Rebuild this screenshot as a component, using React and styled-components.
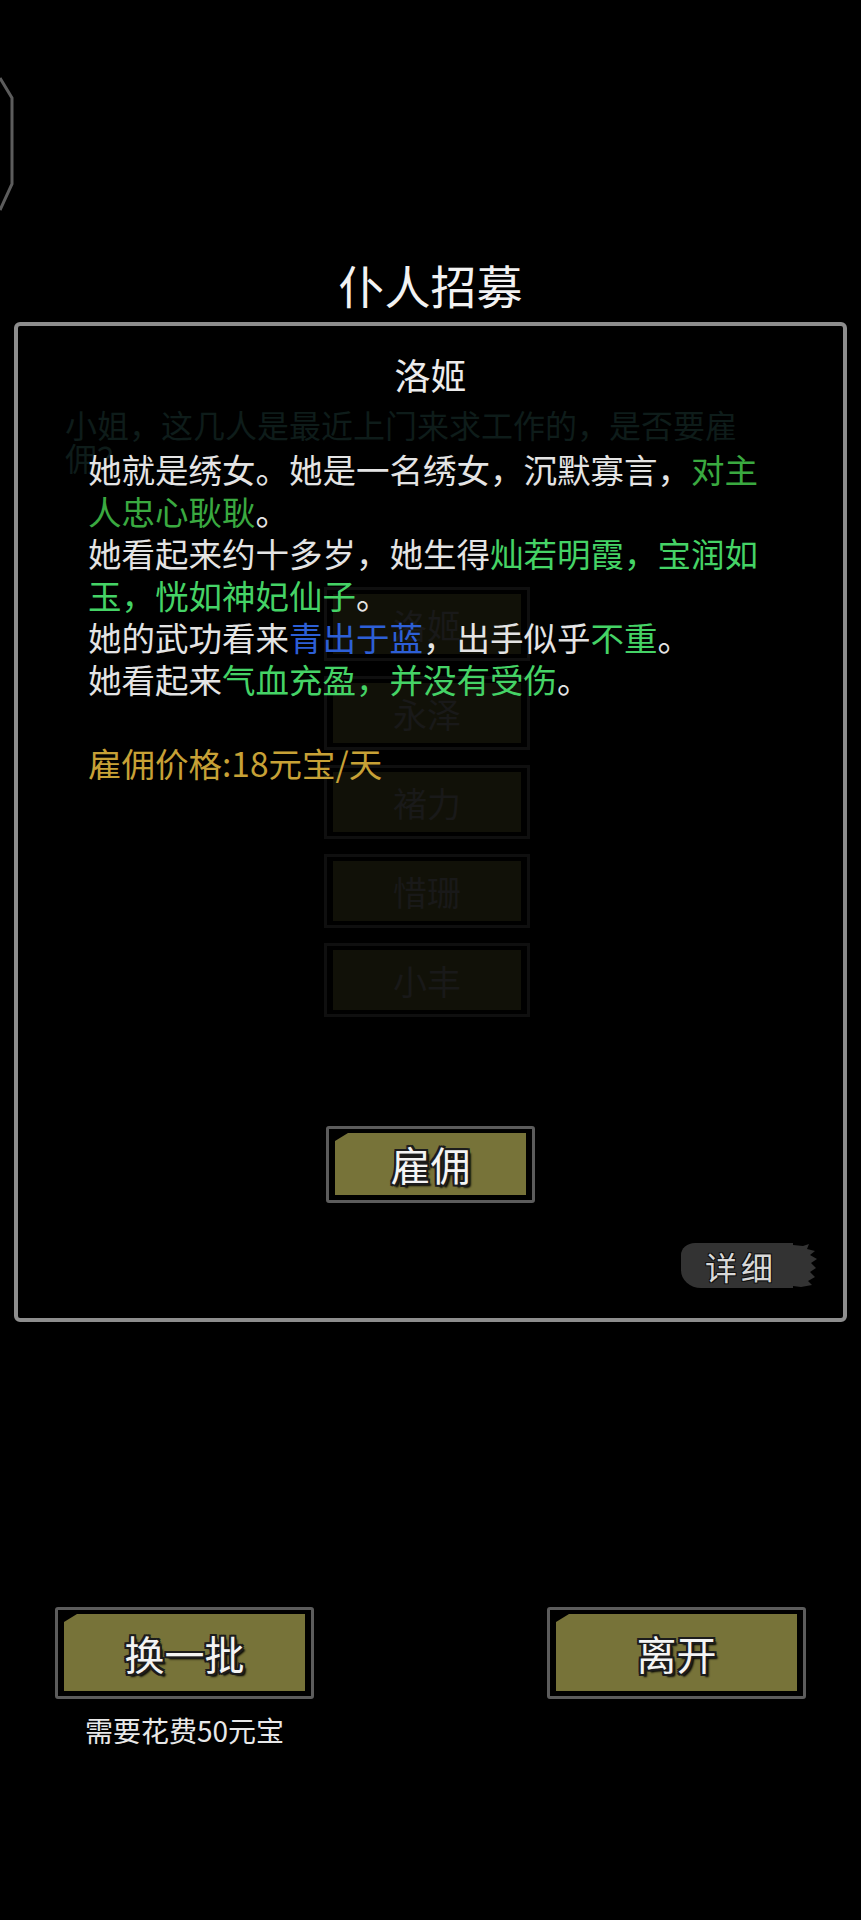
import React from 'react'
import styled, { createGlobalStyle } from 'styled-components'

const GlobalStyle = createGlobalStyle`
  html, body {
    margin: 0;
    padding: 0;
    background: #000;
  }
  body {
    font-family: 'Noto Sans CJK SC', 'Noto Sans', sans-serif;
    color: #e6e6e6;
  }
`

const candidates = ['洛姬', '永泽', '褚力', '惜珊', '小丰']

export default () => (
  <Root>
    <GlobalStyle />
    <EdgeTab viewBox="0 0 14 136" width="14" height="136">
      <path d="M0 2 L12 22 L12 108 L0 134" fill="none" stroke="#5c5c5c" strokeWidth="3" />
    </EdgeTab>

    {/* the hiring screen below the popup, dimmed */}
    <Underlay>
      <DimText>小姐，这几人是最近上门来求工作的，是否要雇佣？</DimText>
      <DimList>
        {candidates.map(name => (
          <DimButton key={name}>{name}</DimButton>
        ))}
      </DimList>
    </Underlay>

    <Overlay>
      <Title>仆人招募</Title>
      <Panel>
        <Name>洛姬</Name>
        <Desc>
          她就是绣女。她是一名绣女，沉默寡言，<Tint $c="#3aa940">对主人忠心耿耿</Tint>。<br />
          她看起来约十多岁，她生得<Tint $c="#45d366">灿若明霞，宝润如玉，恍如神妃仙子</Tint>。<br />
          她的武功看来<Tint $c="#2d5fd6">青出于蓝</Tint>，出手似乎<Tint $c="#45d366">不重</Tint>。<br />
          她看起来<Tint $c="#45d366">气血充盈，并没有受伤</Tint>。<br />
          <br />
          <Tint $c="#c7a136">雇佣价格:18元宝/天</Tint>
        </Desc>
        <HireButton>
          <Face>雇佣</Face>
        </HireButton>
        <Detail>
          <BrushEnd viewBox="0 0 24 45" width="24" height="45" preserveAspectRatio="none">
            <path d="M0 2 L10 3 L16 1 L14 6 L22 8 L17 12 L24 16 L18 20 L23 25 L17 29 L22 34 L15 38 L19 42 L8 44 L0 43 Z" fill="#333" />
          </BrushEnd>
          详细
        </Detail>
      </Panel>
      <Footer>
        <Action>
          <BigButton>
            <Face>换一批</Face>
          </BigButton>
          <Caption>需要花费50元宝</Caption>
        </Action>
        <Action>
          <BigButton>
            <Face>离开</Face>
          </BigButton>
        </Action>
      </Footer>
    </Overlay>
  </Root>
)

const Root = styled.div`
  position: relative;
  width: 861px;
  height: 1920px;
  overflow: hidden;
  background: #000;
`
const EdgeTab = styled.svg`
  position: absolute;
  left: 0;
  top: 76px;
`
const Underlay = styled.div`
  display: flex;
  flex-direction: column;
  padding: 408px 0 0 65px;
`
const DimText = styled.div`
  width: 712px;
  font-size: 32px;
  line-height: 33px;
  color: #0e1c1a;
`
const DimList = styled.div`
  display: flex;
  flex-direction: column;
  align-self: flex-start;
  gap: 15px;
  margin: 113px 0 0 259px;
`
const DimButton = styled.div`
  width: 206px;
  height: 74px;
  box-sizing: border-box;
  border: 3px solid #0f0f0f;
  padding: 4px 6px;
  display: flex;
  align-items: center;
  justify-content: center;
  font-size: 34px;
  color: #191919;
  background: #000;
  background-clip: content-box;
  background-color: #111108;
`
const Overlay = styled.div`
  position: absolute;
  inset: 0;
  display: flex;
  flex-direction: column;
  padding-top: 256px;
`
const Title = styled.div`
  text-align: center;
  font-size: 46px;
  line-height: 56px;
  color: #f2f2f2;
`
const Panel = styled.div`
  box-sizing: border-box;
  height: 1000px;
  margin: 10px 14px 0;
  border: 4px solid #8d8d8d;
  border-radius: 6px;
  padding: 26px 26px 0 70px;
  display: flex;
  flex-direction: column;
`
const Name = styled.div`
  margin-left: -44px;
  text-align: center;
  font-size: 36px;
  line-height: 44px;
  color: #ececec;
`
const Desc = styled.div`
  width: 686px;
  margin-top: 52px;
  font-size: 33.5px;
  line-height: 42px;
  color: #e4e4e4;
`
const Tint = styled.span`
  color: ${p => p.$c};
`
const Frame = styled.div`
  box-sizing: border-box;
  border: 3px solid #5c5c5c;
  border-radius: 3px;
  padding: 4px 6px 5px;
  background: #000;
  display: flex;
`
const HireButton = styled(Frame)`
  align-self: center;
  margin: 342px 0 0 -44px;
  width: 209px;
  height: 77px;
  font-size: 40px;
`
const BigButton = styled(Frame)`
  width: 259px;
  height: 92px;
  font-size: 40px;
`
const Face = styled.div`
  flex: 1;
  display: flex;
  align-items: center;
  justify-content: center;
  background: #777339;
  clip-path: polygon(13px 0, 100% 0, 100% 100%, 0 100%, 0 8px);
  color: #f4f4f4;
  line-height: 1;
  text-shadow:
    2px 0 0 #1c1c1c, -2px 0 0 #1c1c1c, 0 2px 0 #1c1c1c, 0 -2px 0 #1c1c1c,
    2px 2px 0 #1c1c1c, -2px 2px 0 #1c1c1c, 2px -2px 0 #1c1c1c, -2px -2px 0 #1c1c1c,
    3px 3px 2px #000;
`
const Detail = styled.div`
  position: relative;
  align-self: flex-end;
  margin: 40px 24px 0 0;
  width: 112px;
  height: 45px;
  box-sizing: border-box;
  padding-left: 24px;
  display: flex;
  align-items: center;
  font-size: 32px;
  letter-spacing: 4px;
  color: #d8d8d8;
  background: #333;
  border-radius: 14px 0 0 20px / 12px 0 0 18px;
  text-shadow: 1px 1px 0 #111, -1px -1px 0 #111, 1px -1px 0 #111, -1px 1px 0 #111;
`
const BrushEnd = styled.svg`
  position: absolute;
  left: 100%;
  top: 0;
`
const Footer = styled.div`
  display: flex;
  justify-content: space-between;
  align-items: flex-start;
  margin-top: 285px;
  padding: 0 55px;
`
const Action = styled.div`
  display: flex;
  flex-direction: column;
  align-items: center;
`
const Caption = styled.div`
  margin-top: 14px;
  font-size: 28px;
  line-height: 34px;
  color: #e8e8e8;
`
